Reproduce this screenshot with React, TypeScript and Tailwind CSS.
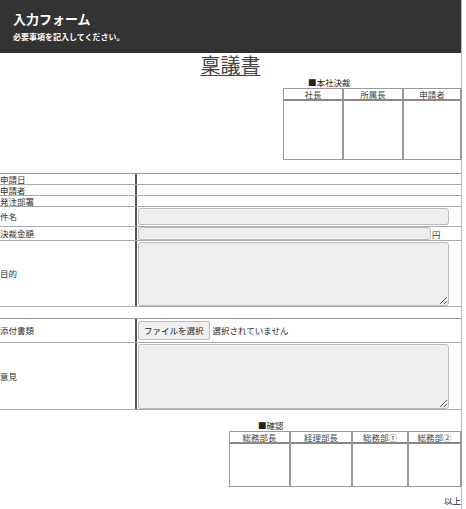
import React from 'react'

const font = { fontFamily: '"Noto Sans CJK JP", "Noto Sans", sans-serif' }

function StampTable({ cols, widths }: { cols: string[]; widths: string[] }) {
  return (
    <div className="flex border border-[#999] border-r-0">
      {cols.map((c, i) => (
        <div key={c} className={`${widths[i]} flex flex-col border-r-2 border-[#999]`}>
          <div className="h-[12px] border-b-2 border-[#888] text-center text-[8.5px] leading-[10px] text-[#444]">{c}</div>
          <div className="flex-1" />
        </div>
      ))}
    </div>
  )
}

function Row({ label, h, children }: { label: string; h: string; children?: React.ReactNode }) {
  return (
    <div className={`flex ${h} border-b border-[#aaa]`}>
      <div className="w-[137px] shrink-0 flex items-center border-r-2 border-[#555] text-[8.5px] leading-[9px] text-[#333]">{label}</div>
      <div className="flex-1 flex items-center">{children}</div>
    </div>
  )
}

export default function App() {
  return (
    <div className="w-[466px] h-[509px] bg-white overflow-hidden flex" style={font}>
      <div className="w-[462px] shrink-0 border-r border-[#bbb] flex flex-col">
        <div className="h-[53px] bg-[#333] px-[13px] pt-[11px]">
          <div className="text-white font-bold text-[13px] leading-[16px]">入力フォーム</div>
          <div className="text-white font-bold text-[8px] leading-[10px] mt-[5px]">必要事項を記入してください。</div>
        </div>

        <div className="text-center h-[25px]">
          <span className="text-[20px] leading-[24px] text-[#444] underline decoration-1 underline-offset-2">稟議書</span>
        </div>

        <div className="flex justify-end">
          <div className="w-[178px]">
            <div className="pl-[25px] h-[10px] text-[8.5px] leading-[9px] text-[#222]">■本社決裁</div>
            <div className="h-[72px] flex">
              <StampTable cols={['社長', '所属長', '申請者']} widths={['w-[60px]', 'w-[60px]', 'w-[58px]']} />
            </div>
          </div>
        </div>

        <div className="mt-[13px] border-t border-[#999]">
          <Row label="申請日" h="h-[11px]" />
          <Row label="申請者" h="h-[11px]" />
          <Row label="発注部署" h="h-[11px]" />
          <Row label="件名" h="h-[20px]">
            <input className="w-[311px] h-[17px] bg-[#eee] border border-[#bbb] rounded-[3px] ml-[1px]" />
          </Row>
          <Row label="決裁金額" h="h-[14px]">
            <input className="w-[293px] h-[13px] bg-[#eee] border border-[#bbb] rounded-[3px] ml-[1px]" />
            <span className="text-[8.5px] leading-[10px] text-[#333] ml-[1px]">円</span>
          </Row>
          <Row label="目的" h="h-[66px]">
            <textarea className="w-[311px] h-[64px] bg-[#eee] border border-[#bbb] rounded-[3px] ml-[1px]" />
          </Row>
        </div>

        <div className="mt-[11px] border-t border-[#999]">
          <Row label="添付書類" h="h-[24px]">
            <span className="ml-[1px] h-[19px] px-[5px] flex items-center bg-[#efefef] border border-[#bbb] rounded-[2px] text-[8.5px] text-[#222]">ファイルを選択</span>
            <span className="ml-[3px] text-[8.5px] text-[#222]">選択されていません</span>
          </Row>
          <Row label="意見" h="h-[67px]">
            <textarea className="w-[311px] h-[65px] bg-[#eee] border border-[#bbb] rounded-[3px] ml-[1px]" />
          </Row>
        </div>

        <div className="flex justify-end mt-[11px]">
          <div className="w-[232px]">
            <div className="pl-[29px] h-[10px] text-[8.5px] leading-[9px] text-[#222]">■確認</div>
            <div className="h-[56px] flex">
              <StampTable cols={['総務部長', '経理部長', '総務部①', '総務部②']} widths={['w-[61px]', 'w-[62px]', 'w-[56px]', 'w-[53px]']} />
            </div>
          </div>
        </div>

        <div className="text-right text-[8.5px] leading-[10px] text-[#222] mt-[8px]">以上</div>
      </div>
    </div>
  )
}
